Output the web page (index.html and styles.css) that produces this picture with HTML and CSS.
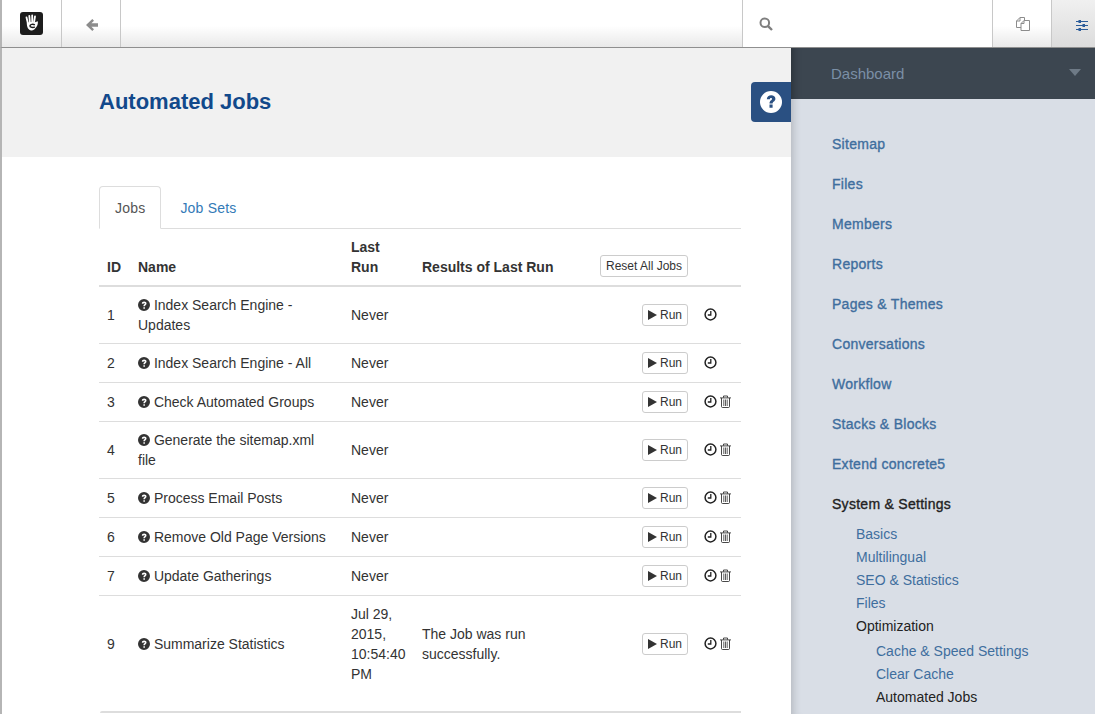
FILE: index.html
```html
<!DOCTYPE html>
<html lang="en">
<head>
<meta charset="utf-8">
<title>Automated Jobs</title>
<link rel="stylesheet" href="styles.css">
</head>
<body>
<header class="toolbar">
  <a class="tool tool-logo">
    <svg class="logo" viewBox="0 0 23 23"><rect width="23" height="23" rx="3" fill="#1d1d1d"/><path d="M6.500 5.500l1.300 5.500M9.300 3.800l.6 6.700M12.200 3.500v7M15 4.500l-1 6" stroke="#fff" stroke-width="1.800" stroke-linecap="round" fill="none"/><path d="M6.800 10.800c2-.8 5.600-1.200 7.400-.2l3.600-1.300c.7 3.500-2.300 9-6.300 9.200-3 .2-4.800-3.500-4.700-7.700z" fill="#fff"/><path d="M14.800 12.800c-1.800-1-4.600-.5-4.800 1s3 2.200 4.800 1" stroke="#1d1d1d" stroke-width="1.500" fill="none"/></svg>
  </a>
  <a class="tool tool-back">
    <svg class="icon-low" width="12" height="12" viewBox="0 0 12 12"><path d="M6.300 0L0 6l6.300 6L8 10.200 5.400 7.700H12V4.300H5.400L8 1.800z" fill="#8c8c8c"/></svg>
  </a>
  <div class="tool-spacer"></div>
  <div class="search">
    <svg width="14" height="14" viewBox="0 0 14 14"><circle cx="5.800" cy="5.800" r="4.300" fill="none" stroke="#7f7f7f" stroke-width="2"/><path d="M8.800 8.800L13 13" stroke="#7f7f7f" stroke-width="2.400"/></svg>
  </div>
  <a class="tool tool-pages">
    <svg width="14" height="14" viewBox="0 0 14 14"><path d="M5 10.500H.5V4L4 .5h4.500V4M4 .5V4H.5" fill="none" stroke="#8c8c8c"/><path d="M5 13.500v-7l3-3h5.500v10zM8 3.500v3H5" fill="#fff" stroke="#8c8c8c"/></svg>
  </a>
  <a class="tool tool-settings">
    <svg class="icon-low" width="12" height="11" viewBox="0 0 12 11"><path d="M0 1.500h12M0 5.500h12M0 9.500h12" stroke="#2b5c9a" stroke-width="1.200"/><path d="M2.500 0h2.500v3H2.500zM6.500 4h2.500v3H6.500zM2.500 8h2.500v3H2.500z" fill="#2b5c9a"/></svg>
  </a>
</header>
<div class="shell">
  <main class="page">
    <div class="page-head">
      <h1 class="page-title">Automated Jobs</h1>
      <a class="help-tab"><svg width="22" height="22" viewBox="0 0 22 22"><circle cx="11" cy="11" r="11" fill="#fff"/><path d="M6.800 8.300C7 5.700 8.800 4.300 11.200 4.300c2.500 0 4.200 1.500 4.200 3.500 0 2.700-2.800 2.800-2.800 4.800H9.500c0-3.300 2.500-3.300 2.500-4.600 0-.6-.4-1-1-1-.7 0-1 .5-1.100 1.300zM9.500 13.600h3.100v3.100H9.500z" fill="#2a5082"/></svg></a>
    </div>
    <div class="content">
      <nav class="tabs">
        <a class="tab tab-active">Jobs</a>
        <a class="tab">Job Sets</a>
      </nav>
      <table class="jobs">
        <colgroup><col class="c-id"><col class="c-name"><col class="c-last"><col class="c-res"><col class="c-btn"><col class="c-ico"></colgroup>
        <thead>
          <tr><th>ID</th><th>Name</th><th>Last Run</th><th>Results of Last Run</th><th class="right"><button class="btn">Reset All Jobs</button></th><th></th></tr>
        </thead>
        <tbody>
          <tr><td>1</td><td><svg class="q" viewBox="0 0 12 12"><use href="#qm"/></svg> Index Search Engine - Updates</td><td>Never</td><td></td><td class="right"><button class="btn"><span class="play"></span>Run</button></td><td class="icons"><svg class="ic" viewBox="0 0 13 13"><use href="#clock"/></svg></td></tr>
          <tr><td>2</td><td><svg class="q" viewBox="0 0 12 12"><use href="#qm"/></svg> Index Search Engine - All</td><td>Never</td><td></td><td class="right"><button class="btn"><span class="play"></span>Run</button></td><td class="icons"><svg class="ic" viewBox="0 0 13 13"><use href="#clock"/></svg></td></tr>
          <tr><td>3</td><td><svg class="q" viewBox="0 0 12 12"><use href="#qm"/></svg> Check Automated Groups</td><td>Never</td><td></td><td class="right"><button class="btn"><span class="play"></span>Run</button></td><td class="icons"><svg class="ic" viewBox="0 0 13 13"><use href="#clock"/></svg><svg class="ic" viewBox="0 0 13 13"><use href="#trash"/></svg></td></tr>
          <tr><td>4</td><td><svg class="q" viewBox="0 0 12 12"><use href="#qm"/></svg> Generate the sitemap.xml file</td><td>Never</td><td></td><td class="right"><button class="btn"><span class="play"></span>Run</button></td><td class="icons"><svg class="ic" viewBox="0 0 13 13"><use href="#clock"/></svg><svg class="ic" viewBox="0 0 13 13"><use href="#trash"/></svg></td></tr>
          <tr><td>5</td><td><svg class="q" viewBox="0 0 12 12"><use href="#qm"/></svg> Process Email Posts</td><td>Never</td><td></td><td class="right"><button class="btn"><span class="play"></span>Run</button></td><td class="icons"><svg class="ic" viewBox="0 0 13 13"><use href="#clock"/></svg><svg class="ic" viewBox="0 0 13 13"><use href="#trash"/></svg></td></tr>
          <tr><td>6</td><td><svg class="q" viewBox="0 0 12 12"><use href="#qm"/></svg> Remove Old Page Versions</td><td>Never</td><td></td><td class="right"><button class="btn"><span class="play"></span>Run</button></td><td class="icons"><svg class="ic" viewBox="0 0 13 13"><use href="#clock"/></svg><svg class="ic" viewBox="0 0 13 13"><use href="#trash"/></svg></td></tr>
          <tr><td>7</td><td><svg class="q" viewBox="0 0 12 12"><use href="#qm"/></svg> Update Gatherings</td><td>Never</td><td></td><td class="right"><button class="btn"><span class="play"></span>Run</button></td><td class="icons"><svg class="ic" viewBox="0 0 13 13"><use href="#clock"/></svg><svg class="ic" viewBox="0 0 13 13"><use href="#trash"/></svg></td></tr>
          <tr><td>9</td><td><svg class="q" viewBox="0 0 12 12"><use href="#qm"/></svg> Summarize Statistics</td><td>Jul 29, 2015, 10:54:40 PM</td><td>The Job was run successfully.</td><td class="right"><button class="btn"><span class="play"></span>Run</button></td><td class="icons"><svg class="ic" viewBox="0 0 13 13"><use href="#clock"/></svg><svg class="ic" viewBox="0 0 13 13"><use href="#trash"/></svg></td></tr>
        </tbody>
      </table>
      <div class="table-end"></div>
    </div>
  </main>
  <aside class="side">
    <div class="side-head"><span>Dashboard</span><i class="caret"></i></div>
    <ul class="menu">
      <li><a>Sitemap</a></li>
      <li><a>Files</a></li>
      <li><a>Members</a></li>
      <li><a>Reports</a></li>
      <li><a>Pages &amp; Themes</a></li>
      <li><a>Conversations</a></li>
      <li><a>Workflow</a></li>
      <li><a>Stacks &amp; Blocks</a></li>
      <li><a>Extend concrete5</a></li>
      <li class="open"><a class="cur">System &amp; Settings</a>
        <ul class="sub">
          <li><a>Basics</a></li>
          <li><a>Multilingual</a></li>
          <li><a>SEO &amp; Statistics</a></li>
          <li><a>Files</a></li>
          <li><a class="cur">Optimization</a>
            <ul class="sub2">
              <li><a>Cache &amp; Speed Settings</a></li>
              <li><a>Clear Cache</a></li>
              <li><a class="cur">Automated Jobs</a></li>
            </ul>
          </li>
        </ul>
      </li>
    </ul>
  </aside>
</div>
<svg class="defs" width="0" height="0">
  <symbol id="qm" viewBox="0 0 12 12"><path fill-rule="evenodd" d="M6 0a6 6 0 1 1 0 12A6 6 0 0 1 6 0zM3.800 4.500l1.500.4c.1-.6.3-.9.8-.9.400 0 .7.200.7.600 0 .7-1.400.9-1.400 2.400v.3h1.500c0-1.100 1.600-1.100 1.600-2.800C8.500 3.300 7.400 2.600 6.100 2.600c-1.300 0-2.100.7-2.300 1.900zM5.400 8.200v1.500h1.500V8.200z" fill="#333"/></symbol>
  <symbol id="clock" viewBox="0 0 13 13"><circle cx="6.500" cy="6.500" r="5.400" fill="none" stroke="#222" stroke-width="1.500"/><path d="M6.800 3V7H3.800" fill="none" stroke="#222" stroke-width="1.300"/></symbol>
  <symbol id="trash" viewBox="0 0 13 13"><path d="M1 2.900h11M4.500 2.700V1h4v1.700M2.500 3v8.500c0 .5.300 1 .8 1h6.400c.5 0 .8-.5.800-1V3" fill="none" stroke="#333" stroke-width=".9"/><path d="M4.800 4.500v6.500M6.500 4.500v6.500M8.200 4.500v6.500" stroke="#333" stroke-width=".8"/></symbol>
</svg>
</body>
</html>
```
FILE: styles.css
```css
* { box-sizing: border-box; }
html, body { margin: 0; height: 714px; overflow: hidden; }
body { font-family: "Liberation Sans", Arial, sans-serif; font-size: 14px; line-height: 20px; color: #333; background: #fff; }
.defs { position: absolute; }

.toolbar { display: flex; height: 48px; border-bottom: 1px solid #8f8f8f; border-left: 2px solid #b5b5b5; background: linear-gradient(#fff 55%, #e9e9e9); }
.tool { display: flex; align-items: center; justify-content: center; border-right: 1px solid #c8c8c8; height: 47px; }
.tool-logo { width: 60px; padding-right: 1px; }
.logo { width: 23px; height: 23px; }
.icon-low { margin-top: 3px; }
.tool-back { width: 59px; padding-left: 2px; }
.tool-spacer { flex: 1; border-right: 1px solid #c8c8c8; }
.search { width: 250px; display: flex; align-items: center; padding-left: 16px; background: #fff; border-right: 1px solid #c8c8c8; }
.tool-pages { width: 59px; padding-left: 2px; }
.tool-settings { width: 43px; border-right: 0; justify-content: flex-start; padding-left: 24px; background: linear-gradient(#f0f0f0, #dcdcdc); }

.shell { display: flex; height: 666px; }
.page { width: 791px; border-left: 2px solid #b5b5b5; background: #fff; overflow: hidden; }
.page-head { position: relative; height: 109px; background: #f1f1f1; padding: 41px 0 0 97px; }
.page-title { margin: 0; font-size: 22px; line-height: 26px; font-weight: 700; color: #12498b; }
.help-tab { position: absolute; right: 0; top: 34px; width: 40px; height: 40px; background: #2a5082; border-radius: 4px 0 0 4px; display: flex; align-items: center; justify-content: center; }

.content { padding: 29px 50px 0 97px; }
.tabs { display: flex; height: 43px; border-bottom: 1px solid #ddd; }
.tab { height: 43px; padding: 11px 15px 0; margin-right: 3px; color: #337ab7; border: 1px solid transparent; border-radius: 4px 4px 0 0; letter-spacing: .2px; }
.tab-active { color: #555; background: #fff; border-color: #ddd #ddd #fff; }

.jobs { width: 642px; table-layout: fixed; border-collapse: separate; border-spacing: 0; }
.c-id { width: 31px; }
.c-name { width: 213px; }
.c-last { width: 71px; }
.c-res { width: 178px; }
.c-btn { width: 104px; }
.c-ico { width: 45px; }
.jobs th { text-align: left; vertical-align: bottom; padding: 8px; font-weight: 700; color: #333; border-bottom: 2px solid #ddd; height: 58px; }
.jobs td { padding: 8px; vertical-align: middle; border-bottom: 1px solid #ddd; height: 39px; }
.jobs th.right, .jobs td.right { text-align: right; line-height: 22px; white-space: nowrap; }
.jobs tbody tr:last-child td { border-bottom: 0; }
.table-end { height: 2px; background: #ddd; margin: 19px 0 0 1px; width: 641px; border-radius: 2px 0 0 0; }

.q { width: 12px; height: 12px; vertical-align: -1px; }
.jobs td.icons { white-space: nowrap; line-height: 22px; }
.ic { width: 13px; height: 13px; vertical-align: -1px; margin-right: 2px; display: inline-block; }

.btn { display: inline-block; height: 22px; padding: 0 5px; font: 12px/20px "Liberation Sans", Arial, sans-serif; color: #333; background: #fff; border: 1px solid #ccc; border-radius: 3px; vertical-align: top; white-space: nowrap; }
.play { display: inline-block; width: 0; height: 0; border-left: 9px solid #333; border-top: 5px solid transparent; border-bottom: 5px solid transparent; margin-right: 3px; vertical-align: -1px; }

.side { width: 304px; background: #d9dee6; box-shadow: inset 10px 0 8px -8px rgba(0,0,0,.18); }
.side-head { height: 51px; background: #3c4650; padding: 16px 14px 0 40px; display: flex; justify-content: space-between; color: #7b8fa6; font-size: 15px; box-shadow: inset 10px 0 8px -8px rgba(0,0,0,.3); }
.caret { width: 0; height: 0; margin-top: 5px; border-top: 7px solid #6e7a86; border-left: 6.500px solid transparent; border-right: 6.500px solid transparent; }
.menu, .sub, .sub2 { list-style: none; margin: 0; padding: 0; }
.menu { padding: 35px 0 0 41px; }
.menu > li { height: 40px; }
.menu a { color: #3f6e9e; font-weight: 400; letter-spacing: .28px; -webkit-text-stroke: .35px currentColor; }
.menu a.cur { color: #222; }
.sub { padding: 10px 0 0 24px; }
.sub > li { line-height: 20px; margin-bottom: 3px; }
.menu .sub a, .menu .sub2 a { font-weight: 400; letter-spacing: 0; -webkit-text-stroke: 0; }
.sub2 { padding: 5px 0 0 20px; }
.sub2 > li { margin-bottom: 3px; }
```
